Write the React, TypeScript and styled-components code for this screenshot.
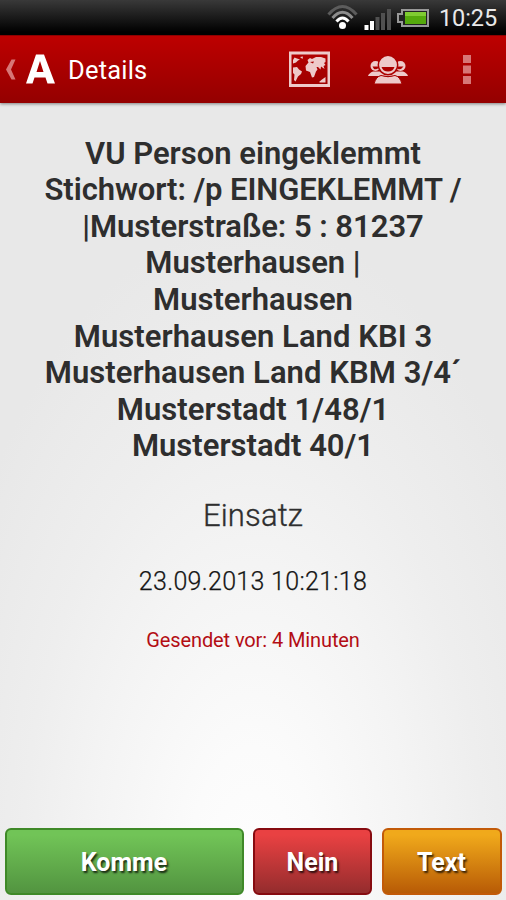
import React from "react";
import styled, { createGlobalStyle } from "styled-components";

const GlobalStyle = createGlobalStyle`
  * { box-sizing: border-box; }
  body { margin: 0; font-family: Roboto, "Noto Sans", sans-serif; }
`;

const Screen = styled.div`
  width: 506px;
  height: 900px;
  display: flex;
  flex-direction: column;
  overflow: hidden;
  background: radial-gradient(ellipse 330px 660px at 253px 880px, #fefefe 0%, #fbfbfb 20%, #f4f4f4 48%, #eeeeee 70%, #e8e8e8 100%);
`;

const StatusBar = styled.header`
  height: 35px;
  flex: none;
  display: flex;
  align-items: center;
  justify-content: flex-end;
  padding-right: 9px;
  background: linear-gradient(#393939, #1a1a1a 50%, #000 92%);
`;

const StatusIcons = styled.svg`
  width: 110px;
  height: 35px;
  margin-right: 5px;
  flex: none;
`;

const Clock = styled.time`
  width: 58px;
  font-size: 23.5px;
  line-height: 35px;
  letter-spacing: -0.1px;
  padding-top: 2px;
  color: #e9e9e9;
  white-space: nowrap;
`;

const ActionBar = styled.nav`
  height: 68px;
  flex: none;
  display: flex;
  align-items: center;
  color: #fff;
  background: linear-gradient(#bd0000, #940000);
  border-top: 1px solid #8d0000;
  box-shadow: 0 1px 3px rgba(0, 0, 0, 0.45);
`;

const BackMark = styled.svg`
  width: 60px;
  height: 67px;
  flex: none;
`;

const Title = styled.h1`
  margin: 0 0 0 8px;
  font-size: 25.5px;
  font-weight: 400;
  letter-spacing: 0.2px;
  flex: 1;
`;

const ActionIcons = styled.svg`
  width: 226px;
  height: 67px;
  flex: none;
`;

const Content = styled.main`
  flex: 1;
  display: flex;
  flex-direction: column;
  align-items: center;
  padding-top: 32.6px;
  text-align: center;
  color: #2e2e2e;
`;

const Line = styled.div<{ $spacing: number }>`
  height: 36.6px;
  line-height: 36.6px;
  font-size: 31px;
  font-weight: 600;
  white-space: pre;
  letter-spacing: ${(p) => p.$spacing}px;
`;

const Kind = styled.div`
  margin-top: 32.4px;
  line-height: 38px;
  font-size: 31px;
  font-weight: 300;
  letter-spacing: 0.15px;
  -webkit-text-stroke: 0.35px currentColor;
`;

const Stamp = styled.div`
  margin-top: 31px;
  line-height: 32px;
  font-size: 25px;
  font-weight: 300;
  letter-spacing: 0.3px;
  color: #151515;
  -webkit-text-stroke: 0.25px currentColor;
`;

const Sent = styled.div`
  margin-top: 29px;
  line-height: 26px;
  font-size: 20px;
  font-weight: 400;
  letter-spacing: -0.1px;
  color: #b30d14;
`;

const Footer = styled.footer`
  flex: none;
  display: grid;
  grid-template-columns: 239px 119px 120px;
  column-gap: 9.5px;
  padding: 0 4.5px 5px;
`;

const Answer = styled.button<{ $top: string; $bottom: string; $edge: string }>`
  height: 67px;
  padding: 2px 0 0;
  border: 2px solid ${(p) => p.$edge};
  border-radius: 6px;
  background: linear-gradient(${(p) => p.$top} 8%, ${(p) => p.$bottom});
  color: #fff;
  font: 700 25px Roboto, sans-serif;
  text-shadow: 1.5px 1.5px 2px rgba(0, 0, 0, 0.75);
`;

const lines = [
  { text: "VU Person eingeklemmt", spacing: 0 },
  { text: "Stichwort: /p EINGEKLEMMT /", spacing: -0.08 },
  { text: "|Musterstraße: 5 : 81237", spacing: -0.03 },
  { text: "Musterhausen |", spacing: 0 },
  { text: "Musterhausen", spacing: 0 },
  { text: "Musterhausen Land KBI 3", spacing: 0.06 },
  { text: "Musterhausen Land KBM 3/4´", spacing: 0.06 },
  { text: "Musterstadt 1/48/1", spacing: 0.05 },
  { text: "Musterstadt 40/1", spacing: 0 },
];

export default function App() {
  return (
    <Screen>
      <GlobalStyle />
      <StatusBar>
        <StatusIcons viewBox="324 0 110 35">
          <g fill="none" strokeWidth="3">
            <path d="M328.500 14.500Q342.500 -1.500 356.500 14.500" stroke="#5c5c5c" />
            <path d="M332.500 18Q342.500 6.500 352.500 18" stroke="#8c8c8c" />
            <path d="M336.500 21.500Q342.500 14.500 348.500 21.500" stroke="#fff" />
          </g>
          <circle cx="342.500" cy="25.500" r="3.500" fill="#fff" />
          <g fill="#505050">
            <rect x="364.500" y="25" width="4" height="5" fill="#fff" />
            <rect x="370" y="21" width="4" height="9" fill="#fff" />
            <rect x="375.500" y="17" width="4" height="13" />
            <rect x="381" y="13" width="4" height="17" />
            <rect x="387" y="9" width="4" height="21" />
          </g>
          <path d="M402 10H428V26H402V22H398V14H402Z" fill="#222" stroke="#999" strokeWidth="2" />
          <rect x="405" y="12" width="21" height="12" fill="#55aa0c" />
          <rect x="405" y="12" width="21" height="4" fill="#80cc32" />
        </StatusIcons>
        <Clock>10:25</Clock>
      </StatusBar>
      <ActionBar>
        <BackMark viewBox="0 36 60 67">
          <path d="M11.500 59.500H15.500L11 69.500L15.500 79.500H11.500L6 69.500Z" fill="#d77777" />
          <path fillRule="evenodd" d="M36 54.500H44L55 83.500H47.500L45.500 77.500H34.500L32.500 83.500H26ZM40 61L36.500 72H43.500Z" fill="#fff" />
        </BackMark>
        <Title>Details</Title>
        <ActionIcons viewBox="280 36 226 67">
          <g fill="#eecaca">
            <path fillRule="evenodd" d="M289 51.500H330V87H289ZM291.500 54.500V84H327.500V54.500Z" />
            <path d="M293 60L294.500 57.500L297 58.500L300 59.500L298 60.500L296 62.500L293 63.500Z" />
            <path d="M293 67.500L297 67L299 69.500L302 71.500L301 74L298 76.500L295.500 81.500L294 80L294.500 74.500L293 73Z" />
            <path d="M305.500 66L308.500 62.500L307.500 60L310 58L312 59L316 57L321 57L325.500 58.500V62L324 63L325.500 65L323.500 66L324.500 69L321 66.500L320.500 69.500L318 67L316.500 67L317.500 69.500L316 71.500L314 77L312 77.500L310 72L306 70.500Z" />
            <path d="M300 57L303 56.500L302.500 59ZM319 82L322 79.500L325.500 77V82.500H320Z" />
            <path d="M310 62L314 61.500L313 63.500Z" fill="#a90000" />
          </g>
          <g fill="#eecaca">
            <circle cx="375.500" cy="66" r="5" />
            <circle cx="400.500" cy="66" r="5" />
            <path d="M368 76Q369 73 373 71.500H403Q407 73 408 76Z" />
            <path d="M372.500 66.500H380Q377 70 374 69ZM396 66.500H403.500Q401 70 398 69Z" fill="#ac0000" />
            <circle cx="388" cy="65" r="9.700" stroke="#ac0000" strokeWidth="1.500" />
            <path d="M374 84Q376 76.500 381 75.500Q388 78 395 75.500Q400 76.500 402 84Z" stroke="#a60000" />
          </g>
          <path d="M381.500 67H394.500Q393 71.500 388 71.500Q383 71.500 381.500 67Z" fill="#ac0000" />
          <g fill="#d77777">
            <rect x="463" y="55" width="8" height="8" />
            <rect x="463" y="65.500" width="8" height="8" />
            <rect x="463" y="76" width="8" height="8" />
          </g>
        </ActionIcons>
      </ActionBar>
      <Content>
        {lines.map((l, i) => (
          <Line key={i} $spacing={l.spacing}>{l.text}</Line>
        ))}
        <Kind>Einsatz</Kind>
        <Stamp>23.09.2013 10:21:18</Stamp>
        <Sent>Gesendet vor: 4 Minuten</Sent>
      </Content>
      <Footer>
        <Answer $top="#71c457" $bottom="#529440" $edge="#3f8928">Komme</Answer>
        <Answer $top="#e94142" $bottom="#942c2d" $edge="#860b10">Nein</Answer>
        <Answer $top="#f0a91b" $bottom="#b85b06" $edge="#c25a08">Text</Answer>
      </Footer>
    </Screen>
  );
}
